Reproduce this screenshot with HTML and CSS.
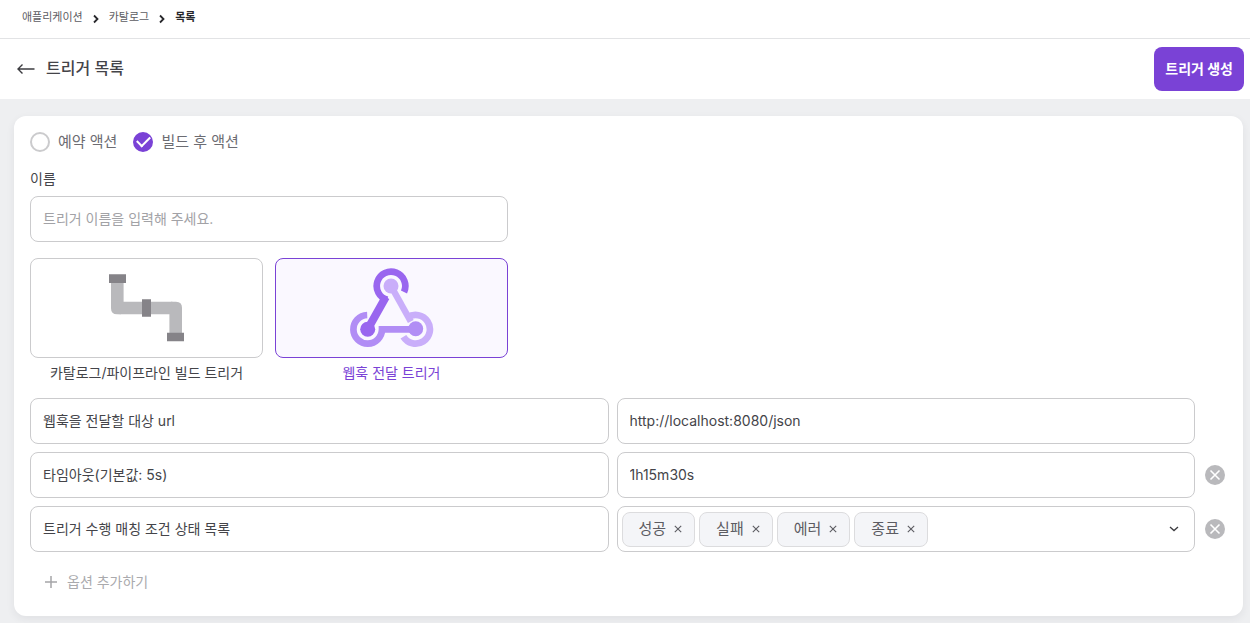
FILE: index.html
```html
<!DOCTYPE html>
<html lang="ko">
<head>
<meta charset="utf-8">
<meta name="viewport" content="width=device-width, initial-scale=1">
<title>트리거 목록</title>
<link rel="stylesheet" href="styles.css">
</head>
<body>
<nav class="breadcrumb" aria-label="breadcrumb">
  <a href="#">애플리케이션</a>
  <svg class="crumb-sep" width="6" height="10" viewBox="0 0 6 10"><path d="M1 1.5 4.5 5 1 8.5"/></svg>
  <a href="#">카탈로그</a>
  <svg class="crumb-sep" width="6" height="10" viewBox="0 0 6 10"><path d="M1 1.5 4.5 5 1 8.5"/></svg>
  <a href="#" class="current" aria-current="page">목록</a>
</nav>
<header class="page-header">
  <button type="button" class="icon-button" aria-label="뒤로">
    <svg class="back-icon" width="18" height="12" viewBox="0 0 18 12"><path d="M17.5 6H1M5.5 1.5 1 6l4.500 4.500"/></svg>
  </button>
  <h1>트리거 목록</h1>
  <button type="button" class="primary">트리거 생성</button>
</header>
<main>
  <form class="card">
    <div class="radios">
      <label class="radio"><input type="radio" name="action"><span>예약 액션</span></label>
      <label class="radio"><input type="radio" name="action" checked><span>빌드 후 액션</span></label>
    </div>
    <div class="name-field">
      <label for="name">이름</label>
      <input id="name" class="field" type="text" placeholder="트리거 이름을 입력해 주세요.">
    </div>
    <div class="types">
      <button type="button" class="type" aria-pressed="false">
        <span class="tile">
          <svg width="75" height="68" viewBox="0 0 75 68">
            <path d="M8.300 5v25q0 4 4 4h50.400q4 0 4 4v24" fill="none" stroke="#b9b9bc" stroke-width="12.600"/>
            <path d="M2 28h10v12.300H8q-6 0-6-6zM73 40H62V27.700h5q6 0 6 6z" fill="#b9b9bc"/>
            <path d="M0 .3h17V9H0zM33 25.300h9v17.400h-9zM58 58.700h17v8.600H58z" fill="#858388"/>
          </svg>
        </span>
        <span>카탈로그/파이프라인 빌드 트리거</span>
      </button>
      <button type="button" class="type selected" aria-pressed="true">
        <span class="tile">
          <svg width="85" height="80" viewBox="0 0 85 80" fill="none" stroke-width="6.700">
            <path d="M18.200 47A14.300 14.300 0 1 0 33 61.300H62" stroke="#b18df5"/>
            <circle cx="66.700" cy="60.800" r="7.500" fill="#b18df5"/>
            <path d="M42 18 61.800 53.500" stroke="#c9aefa" stroke-width="6.500"/>
            <path d="M58.500 49.500A14.300 14.300 0 1 1 54.400 68.700" stroke="#c9aefa"/>
            <circle cx="42" cy="18" r="7.500" fill="#c9aefa"/>
            <path d="M55 24A14.300 14.300 0 1 0 38.300 31.800" stroke="#9966ef"/>
            <path d="M36.800 29 18.700 61.300" stroke="#9966ef" stroke-width="8"/>
            <circle cx="18.700" cy="61.300" r="7.500" fill="#9966ef"/>
          </svg>
        </span>
        <span>웹훅 전달 트리거</span>
      </button>
    </div>
    <div class="options">
      <div class="option">
        <input class="field" type="text" aria-label="옵션 1" value="웹훅을 전달할 대상 url" readonly>
        <input class="field" type="text" aria-label="옵션 1 값" value="http://localhost:8080/json">
      </div>
      <div class="option">
        <input class="field" type="text" aria-label="옵션 2" value="타임아웃(기본값: 5s)" readonly>
        <input class="field" type="text" aria-label="옵션 2 값" value="1h15m30s">
        <button type="button" class="icon-button remove" aria-label="옵션 2 삭제"><svg width="20" height="20" viewBox="0 0 20 20"><circle cx="10" cy="10" r="10"/><path d="m5.500 5.500 9 9m0-9-9 9"/></svg></button>
      </div>
      <div class="option">
        <input class="field" type="text" aria-label="옵션 3" value="트리거 수행 매칭 조건 상태 목록" readonly>
        <div class="field multi">
          <span class="chip">성공<button type="button" class="icon-button" aria-label="성공 제거"><svg width="8" height="8" viewBox="0 0 8 8"><path d="m.8.8 6.400 6.400m0-6.400L.8 7.200"/></svg></button></span>
          <span class="chip">실패<button type="button" class="icon-button" aria-label="실패 제거"><svg width="8" height="8" viewBox="0 0 8 8"><path d="m.8.8 6.400 6.400m0-6.400L.8 7.200"/></svg></button></span>
          <span class="chip">에러<button type="button" class="icon-button" aria-label="에러 제거"><svg width="8" height="8" viewBox="0 0 8 8"><path d="m.8.8 6.400 6.400m0-6.400L.8 7.200"/></svg></button></span>
          <span class="chip">종료<button type="button" class="icon-button" aria-label="종료 제거"><svg width="8" height="8" viewBox="0 0 8 8"><path d="m.8.8 6.400 6.400m0-6.400L.8 7.200"/></svg></button></span>
          <button type="button" class="icon-button expand" aria-label="목록 열기"><svg width="10" height="6" viewBox="0 0 10 6"><path d="m1 1 4 3.600L9 1"/></svg></button>
        </div>
        <button type="button" class="icon-button remove" aria-label="옵션 3 삭제"><svg width="20" height="20" viewBox="0 0 20 20"><circle cx="10" cy="10" r="10"/><path d="m5.500 5.500 9 9m0-9-9 9"/></svg></button>
      </div>
    </div>
    <button type="button" class="add"><svg width="12" height="12" viewBox="0 0 12 12"><path d="M6 0v12M0 6h12"/></svg>옵션 추가하기</button>
  </form>
</main>
</body>
</html>
```

FILE: styles.css
```css
* { box-sizing: border-box; }
body {
  margin: 0;
  min-height: 100vh;
  background: #eeeff1;
  color: #444449;
  font: 14px/20px Inter, "Noto Sans CJK KR", sans-serif;
}
button, input { font: inherit; color: inherit; }
button { padding: 0; border: 0; background: none; cursor: pointer; }
svg { display: block; flex: none; }
.icon-button { display: flex; align-items: center; justify-content: center; }

.breadcrumb {
  display: flex;
  align-items: center;
  gap: 10px;
  padding: 7px 22px 11px;
  border-bottom: 1px solid #e2e3e5;
  background: #fff;
  font-size: 11px;
}
.breadcrumb a { color: #5c5c62; text-decoration: none; }
.breadcrumb .current { color: #28282c; font-weight: 700; }
.crumb-sep { margin-top: 4px; fill: none; stroke: #28282c; stroke-width: 1.8; }

.page-header {
  display: flex;
  align-items: center;
  gap: 11px;
  padding: 8px 6px 8px 17px;
  background: #fff;
}
.back-icon { fill: none; stroke: #3c3c40; stroke-width: 1.4; }
h1 { flex: 1; margin: 0; padding-bottom: 2px; font-size: 16px; line-height: 24px; font-weight: 500; }
.primary {
  height: 44px;
  padding: 0 11px;
  border-radius: 8px;
  background: #7a42d6;
  color: #fff;
  font-weight: 700;
}

main { padding: 17px 7px 7px 14px; }
.card {
  padding: 16px;
  border-radius: 12px;
  background: #fff;
  box-shadow: 0 3px 8px rgba(40, 45, 60, .07);
}
.radios { display: flex; gap: 16px; color: #6c6c72; font-size: 15px; }
.radio { display: flex; align-items: center; gap: 8px; }
.radio input {
  appearance: none;
  width: 20px;
  height: 20px;
  margin: 0;
  border: 2px solid #cbcbcd;
  border-radius: 50%;
}
.radio input:checked {
  display: grid;
  place-items: center;
  border-color: #7a42d6;
  background: #7a42d6;
}
.radio input:checked::before {
  content: "";
  width: 11px;
  height: 6px;
  margin-bottom: 4px;
  border: solid #fff;
  border-width: 0 0 2px 2px;
  transform: rotate(-45deg);
}

.name-field { display: grid; gap: 7px; max-width: 478px; margin-top: 17px; }
.field {
  width: 100%;
  min-width: 0;
  height: 46px;
  padding: 0 12px 2px;
  border: 1px solid #cbcbcd;
  border-radius: 8px;
  background: #fff;
}
.field::placeholder { color: #a2a2a6; opacity: 1; }

.types {
  display: grid;
  grid-template-columns: 1fr 1fr;
  gap: 12px;
  max-width: 478px;
  margin-top: 16px;
}
.type { display: grid; gap: 5px; }
.tile {
  display: grid;
  place-items: center;
  height: 100px;
  border: 1px solid #cbcbcd;
  border-radius: 8px;
}
.type.selected { color: #7a42d6; }
.selected .tile { border-color: #7a42d6; background: #faf8ff; }

.options { display: grid; gap: 8px; margin-top: 15px; }
.option {
  display: grid;
  grid-template-columns: 1fr 1fr 24px;
  align-items: center;
  gap: 8px;
}
.remove circle { fill: #b9b9bc; }
.remove path { fill: none; stroke: #fff; stroke-width: 1.6; }
.multi { display: flex; align-items: center; gap: 4px; padding: 0 15px 0 4px; }
.chip {
  display: flex;
  align-items: center;
  gap: 8px;
  height: 35px;
  padding: 0 12px 0 16px;
  border: 1px solid #dcdcde;
  border-radius: 8px;
  background: #f4f5f8;
  color: #5c5c62;
  font-size: 15px;
}
.chip path { fill: none; stroke: #5c5c62; stroke-width: 1.1; }
.expand { margin-left: auto; }
.expand path { fill: none; stroke: #3c3c40; stroke-width: 1.3; }

.add {
  display: flex;
  align-items: center;
  gap: 10px;
  margin: 20px 0 8px 15px;
  color: #aaaaad;
}
.add path { stroke: #a5a5a8; stroke-width: 1.5; }
```
